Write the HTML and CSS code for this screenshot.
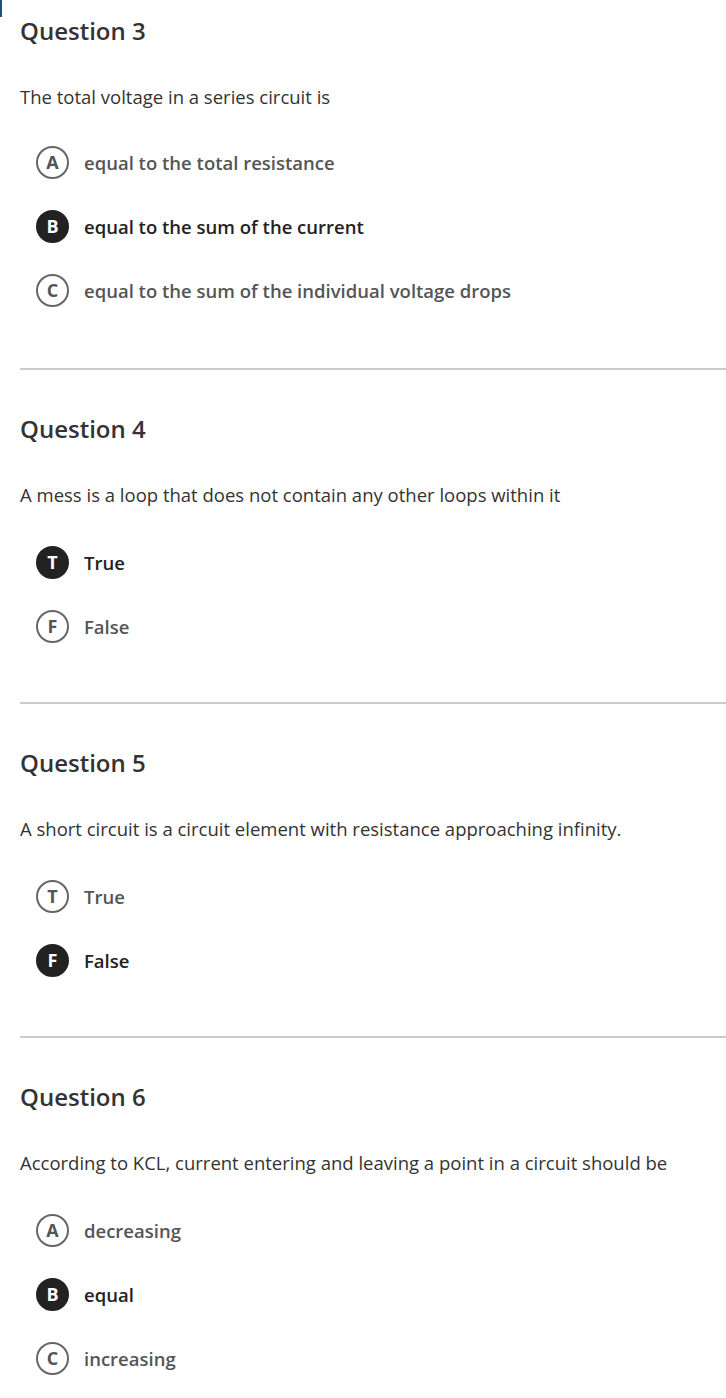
FILE: index.html
```html
<!DOCTYPE html>
<html>
<head>
<meta charset="utf-8">
<link rel="stylesheet" href="styles.css">
</head>
<body>
<div class="edge"></div>
<main class="page">
  <section class="question">
    <h2 class="title">Question 3</h2>
    <p class="prompt">The total voltage in a series circuit is</p>
    <ul class="options">
      <li class="option"><span class="badge">A</span><span class="label">equal to the total resistance</span></li>
      <li class="option selected"><span class="badge">B</span><span class="label">equal to the sum of the current</span></li>
      <li class="option"><span class="badge">C</span><span class="label">equal to the sum of the individual voltage drops</span></li>
    </ul>
  </section>
  <section class="question">
    <h2 class="title">Question 4</h2>
    <p class="prompt">A mess is a loop that does not contain any other loops within it</p>
    <ul class="options">
      <li class="option selected"><span class="badge">T</span><span class="label">True</span></li>
      <li class="option"><span class="badge">F</span><span class="label">False</span></li>
    </ul>
  </section>
  <section class="question">
    <h2 class="title">Question 5</h2>
    <p class="prompt">A short circuit is a circuit element with resistance approaching infinity.</p>
    <ul class="options">
      <li class="option"><span class="badge">T</span><span class="label">True</span></li>
      <li class="option selected"><span class="badge">F</span><span class="label">False</span></li>
    </ul>
  </section>
  <section class="question last">
    <h2 class="title">Question 6</h2>
    <p class="prompt">According to KCL, current entering and leaving a point in a circuit should be</p>
    <ul class="options">
      <li class="option"><span class="badge">A</span><span class="label">decreasing</span></li>
      <li class="option selected"><span class="badge">B</span><span class="label">equal</span></li>
      <li class="option"><span class="badge">C</span><span class="label">increasing</span></li>
    </ul>
  </section>
</main>
</body>
</html>
```

FILE: styles.css
```css
html, body {
  margin: 0;
  padding: 0;
  background: #ffffff;
}
body {
  font-family: "Open Sans", "Liberation Sans", sans-serif;
  color: #333333;
  position: relative;
  height: 1398px;
  overflow: hidden;
}
.edge {
  position: absolute;
  left: 0;
  top: 0;
  width: 2px;
  height: 17px;
  background: #1d4f85;
}
.page {
  padding-left: 20px;
}
.question {
  padding-top: 44px;
  padding-bottom: 60px;
  border-bottom: 2px solid #cccccc;
}
.question:first-child {
  padding-top: 16px;
  padding-bottom: 62px;
}
.question.last {
  border-bottom: none;
}
.title {
  margin: 0;
  font-size: 24px;
  line-height: 30px;
  font-weight: 600;
  color: #333333;
}
.prompt {
  margin: 39px 0 0 0;
  font-size: 18.5px;
  line-height: 24px;
  color: #333333;
}
.options {
  list-style: none;
  margin: 39px 0 0 0;
  padding: 0 0 0 16px;
  display: flex;
  flex-direction: column;
  gap: 32px;
}
.question:first-child .options {
  margin-top: 37px;
}
.option {
  display: flex;
  align-items: center;
  gap: 15px;
  height: 32px;
}
.badge {
  box-sizing: border-box;
  width: 33px;
  height: 33px;
  border-radius: 50%;
  border: 2px solid #666666;
  display: flex;
  align-items: center;
  justify-content: center;
  font-size: 18px;
  font-weight: 700;
  color: #555555;
  flex: none;
}
.label {
  font-size: 18.5px;
  font-weight: 600;
  color: #555555;
}
.option.selected .badge {
  background: #222222;
  border-color: #222222;
  color: #ffffff;
}
.option.selected .label {
  color: #222222;
}
```
